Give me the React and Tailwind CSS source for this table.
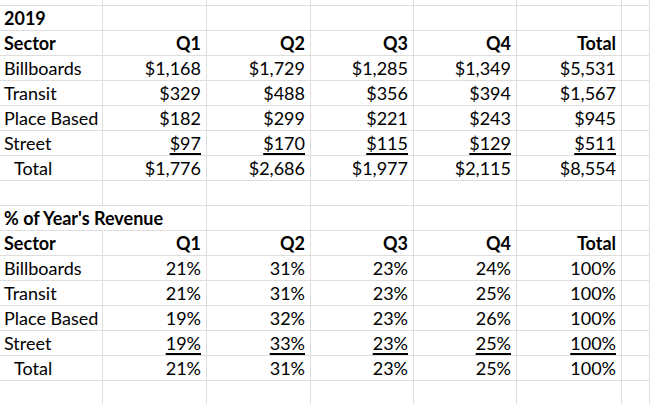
const dollars = {
  title: "2019",
  rows: [
    ["Billboards", "$1,168", "$1,729", "$1,285", "$1,349", "$5,531"],
    ["Transit", "$329", "$488", "$356", "$394", "$1,567"],
    ["Place Based", "$182", "$299", "$221", "$243", "$945"],
    ["Street", "$97", "$170", "$115", "$129", "$511"],
  ],
  total: ["$1,776", "$2,686", "$1,977", "$2,115", "$8,554"],
};

const shares = {
  title: "% of Year's Revenue",
  rows: [
    ["Billboards", "21%", "31%", "23%", "24%", "100%"],
    ["Transit", "21%", "31%", "23%", "25%", "100%"],
    ["Place Based", "19%", "32%", "23%", "26%", "100%"],
    ["Street", "19%", "33%", "23%", "25%", "100%"],
  ],
  total: ["21%", "31%", "23%", "25%", "100%"],
};

const heads = ["Q1", "Q2", "Q3", "Q4", "Total"];

function Cell({ children, right, bold, under, indent, open }) {
  return (
    <div
      className={`h-[25px] border-b border-[#dedede] flex items-end pb-[3px] whitespace-nowrap ${
        open ? "" : "border-r"
      } ${right ? "justify-end pr-[5px]" : "pl-[4px]"} ${indent ? "pl-[14px]" : ""} ${
        bold ? "font-bold" : ""
      }`}
    >
      {under ? (
        <span className="underline decoration-[1.5px] underline-offset-[3px]">{children}</span>
      ) : (
        children
      )}
    </div>
  );
}

function Empty({ open }) {
  return <Cell open={open}>{""}</Cell>;
}

function Block({ data }) {
  return (
    <>
      <Cell bold open={data.title.length > 6}>
        <span className="relative z-10">{data.title}</span>
      </Cell>
      {[0, 1, 2, 3, 4, 5].map((i) => (
        <Empty key={i} />
      ))}
      <Cell bold>Sector</Cell>
      {heads.map((h) => (
        <Cell key={h} right bold>
          {h}
        </Cell>
      ))}
      <Empty />
      {data.rows.map((r, ri) => (
        <div key={r[0]} className="contents">
          <Cell>{r[0]}</Cell>
          {r.slice(1).map((v, i) => (
            <Cell key={i} right under={ri === 3}>
              {v}
            </Cell>
          ))}
          <Empty />
        </div>
      ))}
      <Cell indent>Total</Cell>
      {data.total.map((v, i) => (
        <Cell key={i} right>
          {v}
        </Cell>
      ))}
      <Empty />
      {[0, 1, 2, 3, 4, 5, 6].map((i) => (
        <Empty key={i} />
      ))}
    </>
  );
}

export default function App() {
  return (
    <div
      className="w-[650px] h-[404px] overflow-hidden bg-white text-black text-[18px] leading-none"
      style={{ fontFamily: "Lato, 'Open Sans', sans-serif" }}
    >
      <div className="grid grid-cols-[103px_104px_104px_103px_103px_105px_1fr]">
        {[0, 1, 2, 3, 4, 5, 6].map((i) => (
          <div key={i} className="h-[6px] border-b border-r border-[#dedede]" />
        ))}
        <Block data={dollars} />
        <Block data={shares} />
      </div>
    </div>
  );
}
